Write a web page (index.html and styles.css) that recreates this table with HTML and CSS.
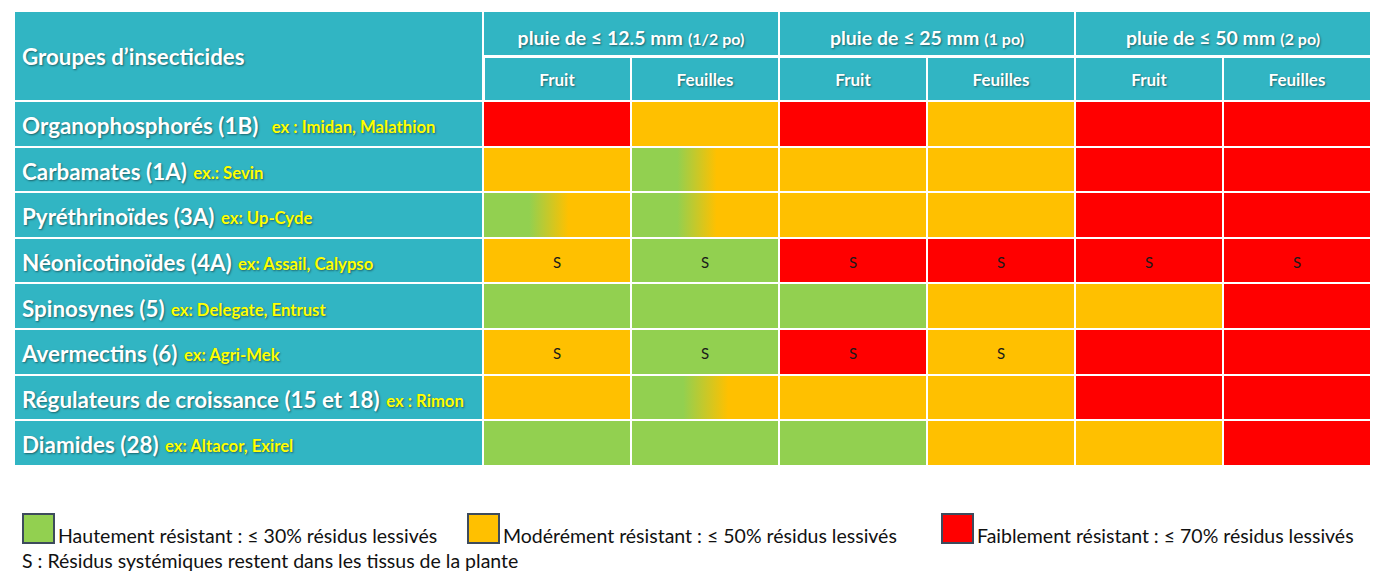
FILE: index.html
```html
<!DOCTYPE html>
<html lang="fr">
<head>
<meta charset="utf-8">
<title>Résistance au lessivage des insecticides</title>
<link rel="stylesheet" href="styles.css">
</head>
<body>
<main class="page">
  <div class="chart">
    <div class="hcell group-title">Groupes d’insecticides</div>
    <div class="hcell rain">pluie de ≤ 12.5 mm <small>(1/2 po)</small></div>
    <div class="hcell rain">pluie de ≤ 25 mm <small>(1 po)</small></div>
    <div class="hcell rain">pluie de ≤ 50 mm <small>(2 po)</small></div>
    <div class="hcell sub first">Fruit</div>
    <div class="hcell sub">Feuilles</div>
    <div class="hcell sub">Fruit</div>
    <div class="hcell sub">Feuilles</div>
    <div class="hcell sub">Fruit</div>
    <div class="hcell sub">Feuilles</div>

    <div class="label">Organophosphorés (1B) <span class="ex wide-gap">ex : Imidan, Malathion</span></div>
    <div class="c red"></div><div class="c orange"></div><div class="c red"></div><div class="c orange"></div><div class="c red"></div><div class="c red"></div>

    <div class="label">Carbamates (1A) <span class="ex">ex.: Sevin</span></div>
    <div class="c orange"></div><div class="c mix"></div><div class="c orange"></div><div class="c orange"></div><div class="c red"></div><div class="c red"></div>

    <div class="label">Pyréthrinoïdes (3A) <span class="ex">ex: Up-Cyde</span></div>
    <div class="c mix"></div><div class="c mix"></div><div class="c orange"></div><div class="c orange"></div><div class="c red"></div><div class="c red"></div>

    <div class="label">Néonicotinoïdes (4A) <span class="ex">ex: Assail, Calypso</span></div>
    <div class="c orange">S</div><div class="c green">S</div><div class="c red">S</div><div class="c red">S</div><div class="c red">S</div><div class="c red">S</div>

    <div class="label">Spinosynes (5) <span class="ex">ex: Delegate, Entrust</span></div>
    <div class="c green"></div><div class="c green"></div><div class="c green"></div><div class="c orange"></div><div class="c orange"></div><div class="c red"></div>

    <div class="label">Avermectins (6) <span class="ex">ex: Agri-Mek</span></div>
    <div class="c orange">S</div><div class="c green">S</div><div class="c red">S</div><div class="c orange">S</div><div class="c red"></div><div class="c red"></div>

    <div class="label">Régulateurs de croissance (15 et 18) <span class="ex">ex : Rimon</span></div>
    <div class="c orange"></div><div class="c mix wide"></div><div class="c orange"></div><div class="c orange"></div><div class="c red"></div><div class="c red"></div>

    <div class="label">Diamides (28) <span class="ex">ex: Altacor, Exirel</span></div>
    <div class="c green"></div><div class="c green"></div><div class="c green"></div><div class="c orange"></div><div class="c orange"></div><div class="c red"></div>
  </div>

  <div class="legend">
    <div class="item"><span class="swatch green"></span>Hautement résistant : ≤ 30% résidus lessivés</div>
    <div class="item"><span class="swatch orange"></span>Modérément résistant : ≤ 50% résidus lessivés</div>
    <div class="item"><span class="swatch red"></span>Faiblement résistant : ≤ 70% résidus lessivés</div>
    <div class="note">S : Résidus systémiques restent dans les tissus de la plante</div>
  </div>
</main>
</body>
</html>
```

FILE: styles.css
```css
* { box-sizing: border-box; }

html, body {
  margin: 0;
  padding: 0;
  background: #ffffff;
}

body {
  font-family: Lato, "Open Sans", sans-serif;
  color: #000;
}

.page {
  padding: 12px 0 0 15px;
  width: 1388px;
  height: 576px;
}

.chart {
  display: grid;
  width: 1355px;
  grid-template-columns: 467px repeat(6, 146px);
  grid-template-rows: 43px 43px repeat(8, 43.6px);
  column-gap: 2px;
  row-gap: 2px;
  background: #ffffff;
}

.hcell {
  background: #31b5c3;
  color: #fff;
  font-weight: 700;
  text-shadow: 1px 1px 2px rgba(0, 0, 0, 0.45);
  display: flex;
  align-items: center;
}

.group-title {
  grid-row: span 2;
  font-size: 22.3px;
  padding: 1px 0 0 7px;
}

.rain {
  grid-column: span 2;
  justify-content: center;
  font-size: 19.5px;
  padding-top: 8px;
}

.rain small {
  font-size: 16px;
  margin-left: 5px;
  padding-top: 2px;
}

.sub {
  justify-content: center;
  font-size: 17px;
  box-shadow: inset 0 1px 0 #fff;
  padding-top: 1px;
}

.sub.first {
  box-shadow: inset 0 1px 0 #fff, inset 1px 0 0 #fff;
}

.label {
  background: #31b5c3;
  color: #fff;
  font-weight: 700;
  font-size: 22.4px;
  text-shadow: 1px 1px 2px rgba(0, 0, 0, 0.45);
  display: flex;
  align-items: center;
  padding: 4px 0 0 7px;
  white-space: pre;
}

.ex {
  color: #ffff00;
  font-size: 16.7px;
  margin-left: 1px;
  padding-top: 3px;
}

.ex.wide-gap {
  margin-left: 8px;
}

.c {
  display: flex;
  align-items: center;
  justify-content: center;
  font-size: 15px;
  color: #1a1a1a;
  padding-top: 2px;
}

.red { background: #ff0000; }
.orange { background: #ffc000; }
.green { background: #92d050; }
.mix { background: linear-gradient(to right, #92d050 31%, #ffc000 58%); }
.mix.wide { background: linear-gradient(to right, #92d050 35%, #ffc000 66%); }

.legend {
  display: grid;
  grid-template-columns: 445px 474px auto;
  margin: 48px 0 0 7px;
  font-size: 19.5px;
  color: #111;
}

.item {
  display: flex;
  align-items: flex-end;
  gap: 3px;
  line-height: 17px;
}

.swatch {
  width: 33px;
  height: 31px;
  border: 2px solid #3d4b5c;
  flex: none;
}

.note {
  grid-column: 1 / -1;
  line-height: 33px;
}
```
